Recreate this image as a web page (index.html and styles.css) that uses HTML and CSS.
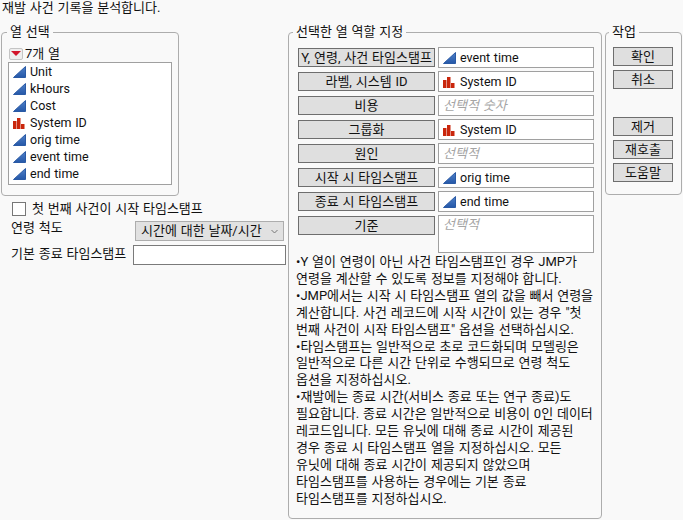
FILE: index.html
```html
<!DOCTYPE html>
<html lang="ko">
<head>
    <meta charset="UTF-8">
    <meta name="viewport" content="width=device-width, initial-scale=1.0">
    <title>재발 사건 기록</title>
    <link rel="stylesheet" href="styles.css">
</head>
<body>
    <svg class="icon-defs" width="0" height="0">
        <defs>
            <linearGradient id="contFill" x1="0" y1="0" x2="0" y2="1">
                <stop offset="0" stop-color="#4f80c8"/>
                <stop offset="1" stop-color="#2558a8"/>
            </linearGradient>
            <symbol id="cont" viewBox="0 0 13 12">
                <path d="M12.500 .5V11.500H.5Z" fill="url(#contFill)" stroke="#2a5aa5"/>
            </symbol>
            <symbol id="nom" viewBox="0 0 13 12">
                <path d="M0 4h3.500v8H0ZM4 1h3.500v11H4ZM8 7h3.500v5H8Z" fill="#c9260c"/>
            </symbol>
        </defs>
    </svg>

    <div class="intro">재발 사건 기록을 분석합니다.</div>

    <div class="dialog">
        <div class="left-col">
            <fieldset class="panel select-panel">
                <legend>열 선택</legend>
                <div class="col-count">
                    <span class="menu-btn"><span class="menu-arrow"></span></span>
                    <span>7개 열</span>
                </div>
                <div class="col-list">
                    <div class="col-item"><svg class="icon"><use href="#cont"/></svg>Unit</div>
                    <div class="col-item"><svg class="icon"><use href="#cont"/></svg>kHours</div>
                    <div class="col-item"><svg class="icon"><use href="#cont"/></svg>Cost</div>
                    <div class="col-item"><svg class="icon"><use href="#nom"/></svg>System ID</div>
                    <div class="col-item"><svg class="icon"><use href="#cont"/></svg>orig time</div>
                    <div class="col-item"><svg class="icon"><use href="#cont"/></svg>event time</div>
                    <div class="col-item"><svg class="icon"><use href="#cont"/></svg>end time</div>
                </div>
            </fieldset>

            <label class="check-row"><span class="check-box"></span>첫 번째 사건이 시작 타임스탬프</label>
            <div class="age-row">
                <span class="age-label">연령 척도</span>
                <div class="dropdown">
                    <span>시간에 대한 날짜/시간</span>
                    <svg class="chevron" width="7" height="5" viewBox="0 0 7 5"><path d="M.5 1L3.500 4L6.500 1" fill="none" stroke="#777"/></svg>
                </div>
            </div>
            <div class="end-row">
                <span class="end-label">기본 종료 타임스탬프</span>
                <div class="text-input"></div>
            </div>
        </div>

        <fieldset class="panel role-panel">
            <legend>선택한 열 역할 지정</legend>
            <div class="roles">
                <div class="btn role-btn">Y, 연령, 사건 타임스탬프</div>
                <div class="role-field"><svg class="icon"><use href="#cont"/></svg>event time</div>
                <div class="btn role-btn">라벨, 시스템 ID</div>
                <div class="role-field"><svg class="icon"><use href="#nom"/></svg>System ID</div>
                <div class="btn role-btn">비용</div>
                <div class="role-field optional">선택적 숫자</div>
                <div class="btn role-btn">그룹화</div>
                <div class="role-field"><svg class="icon"><use href="#nom"/></svg>System ID</div>
                <div class="btn role-btn">원인</div>
                <div class="role-field optional">선택적</div>
                <div class="btn role-btn">시작 시 타임스탬프</div>
                <div class="role-field"><svg class="icon"><use href="#cont"/></svg>orig time</div>
                <div class="btn role-btn">종료 시 타임스탬프</div>
                <div class="role-field"><svg class="icon"><use href="#cont"/></svg>end time</div>
                <div class="btn role-btn">기준</div>
                <div class="role-field optional tall">선택적</div>
            </div>
            <div class="notes">
                <p>•Y 열이 연령이 아닌 사건 타임스탬프인 경우 JMP가<br>연령을 계산할 수 있도록 정보를 지정해야 합니다.</p>
                <p>•JMP에서는 시작 시 타임스탬프 열의 값을 빼서 연령을<br>계산합니다. 사건 레코드에 시작 시간이 있는 경우 "첫<br>번째 사건이 시작 타임스탬프" 옵션을 선택하십시오.</p>
                <p>•타임스탬프는 일반적으로 초로 코드화되며 모델링은<br>일반적으로 다른 시간 단위로 수행되므로 연령 척도<br>옵션을 지정하십시오.</p>
                <p>•재발에는 종료 시간(서비스 종료 또는 연구 종료)도<br>필요합니다. 종료 시간은 일반적으로 비용이 0인 데이터<br>레코드입니다. 모든 유닛에 대해 종료 시간이 제공된<br>경우 종료 시 타임스탬프 열을 지정하십시오. 모든<br>유닛에 대해 종료 시간이 제공되지 않았으며<br>타임스탬프를 사용하는 경우에는 기본 종료<br>타임스탬프를 지정하십시오.</p>
            </div>
        </fieldset>

        <fieldset class="panel action-panel">
            <legend>작업</legend>
            <div class="btn action-btn">확인</div>
            <div class="btn action-btn">취소</div>
            <div class="btn action-btn spaced">제거</div>
            <div class="btn action-btn">재호출</div>
            <div class="btn action-btn">도움말</div>
        </fieldset>
    </div>
</body>
</html>
```

FILE: styles.css
```css
* {
    box-sizing: border-box;
}
body {
    margin: 0;
    padding: 0 1px;
    height: 520px;
    overflow: hidden;
    background-color: #f9f9f9;
    color: #111;
    font-family: Roboto, "Noto Sans CJK KR", sans-serif;
    font-size: 13px;
    line-height: 16px;
    word-spacing: 0.6px;
    white-space: nowrap;
}
.icon-defs {
    position: absolute;
}
.intro {
    padding-left: 1px;
    height: 16px;
}
.dialog {
    display: flex;
    align-items: flex-start;
    margin-top: 8px;
}
.left-col {
    width: 287px;
    flex: none;
}
.panel {
    margin: 0;
    min-width: 0;
    border: 1px solid #adadad;
    border-radius: 4px;
}
.panel legend {
    padding: 0 3px;
    height: 16px;
}
.select-panel {
    width: 178px;
    padding: 5px 6px 10px;
}
.select-panel legend {
    margin-left: -1px;
}
.col-count {
    display: flex;
    align-items: center;
    height: 17px;
}
.menu-btn {
    display: flex;
    justify-content: center;
    align-items: center;
    width: 14px;
    height: 12px;
    margin: 0 2px 0 1px;
    background-color: #eee;
    border: 1px solid #c4c4c4;
    border-radius: 2px;
}
.menu-arrow {
    width: 0;
    height: 0;
    border-left: 5px solid transparent;
    border-right: 5px solid transparent;
    border-top: 5px solid #d2142a;
}
.col-list {
    width: 164px;
    padding: 0 0 2px;
    background-color: #fff;
    border: 1px solid #a0a0a0;
}
.col-item {
    display: flex;
    align-items: center;
    height: 17px;
    padding-left: 4px;
    font-size: 12.5px;
}
.icon {
    width: 13px;
    height: 12px;
    margin-right: 4px;
    flex: none;
}
.check-row {
    display: flex;
    align-items: center;
    height: 16px;
    margin-top: 5px;
    padding-left: 11px;
}
.check-box {
    width: 14px;
    height: 14px;
    margin-right: 6px;
    background-color: #fff;
    border: 1px solid #777;
}
.age-row {
    display: flex;
    justify-content: space-between;
    align-items: flex-start;
    margin-top: 4px;
    padding: 0 4px 0 10px;
}
.age-label {
    margin-top: -1px;
}
.dropdown {
    display: flex;
    justify-content: space-between;
    align-items: center;
    width: 149px;
    height: 20px;
    padding: 0 5px;
    background-color: #e1e1e1;
    border: 1px solid #adadad;
}
.end-row {
    display: flex;
    justify-content: space-between;
    margin-top: 4px;
    padding: 0 2px 0 10px;
}
.end-label {
    margin-top: 1px;
}
.text-input {
    width: 153px;
    height: 20px;
    background-color: #fff;
    border: 1px solid #7a7a7a;
}
.role-panel {
    width: 314px;
    flex: none;
    height: 495px;
    padding: 7px 7px 0 9px;
}
.role-panel legend {
    margin-left: -5px;
}
.roles {
    display: grid;
    grid-template-columns: 137px 156px;
    column-gap: 3px;
    row-gap: 3px;
}
.btn {
    display: flex;
    justify-content: center;
    align-items: center;
    height: 19px;
    background-color: #dfdfdf;
    border: 1px solid #6e6e6e;
    white-space: nowrap;
}
.role-btn {
    margin-top: 1px;
    overflow: hidden;
}
.role-field {
    display: flex;
    align-items: center;
    height: 21px;
    padding-left: 4px;
    background-color: #fff;
    border: 1px solid #a0a0a0;
    font-size: 12.5px;
}
.role-field.optional {
    color: #a5a5a5;
    font-size: 13px;
    font-style: italic;
}
.role-field.tall {
    height: 38px;
    padding-top: 1px;
    align-items: flex-start;
}
.notes {
    margin: 1px 0 0 -2px;
    line-height: 16.9px;
}
.notes p {
    margin: 0;
}
.action-panel {
    width: 77px;
    flex: none;
    margin-left: 3px;
    padding: 7px 8px 12px 7px;
}
.action-panel legend {
    margin-left: -4px;
}
.action-btn {
    margin-bottom: 4px;
}
.action-btn:last-child {
    margin-bottom: 0;
}
.action-btn.spaced {
    margin-top: 28px;
}
```
